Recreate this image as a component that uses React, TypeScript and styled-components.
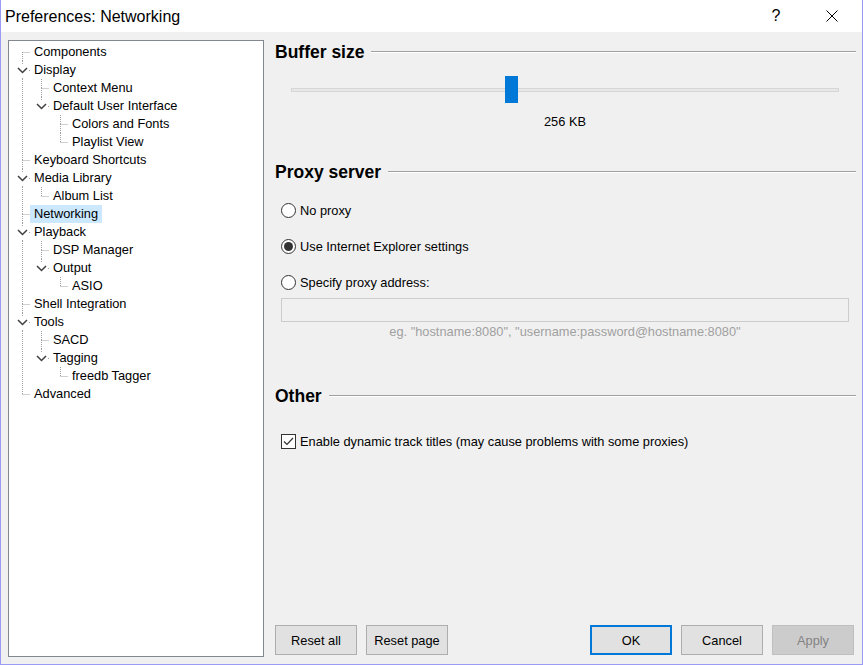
import styled, { createGlobalStyle } from "styled-components";

const GlobalStyle = createGlobalStyle`
  html, body {
    margin: 0;
    padding: 0;
    background: #ffffff;
  }
  body {
    font-family: "Liberation Sans", Arial, sans-serif;
  }
`;

const Window = styled.div`
  width: 863px;
  height: 665px;
  box-sizing: border-box;
  border: 1px solid #9b9bf5;
  border-top: none;
  display: flex;
  flex-direction: column;
  background: #f0f0f0;
  font-family: "Liberation Sans", Arial, sans-serif;
  font-size: 12.8px;
  color: #000;
`;

const TitleBar = styled.div`
  height: 32px;
  flex: none;
  background: #ffffff;
  display: flex;
  align-items: center;
  padding-left: 4px;
  padding-right: 2px;
`;

const Title = styled.div`
  flex: 1;
  font-size: 16px;
  padding-top: 1px;
  color: #000;
`;

const TitleButton = styled.div`
  width: 56px;
  height: 32px;
  display: flex;
  align-items: center;
  justify-content: center;
  font-size: 16px;
`;

const Body = styled.div`
  flex: 1;
  display: flex;
  gap: 11px;
  padding: 8px 6px 7px 7px;
  min-height: 0;
`;

const TreePanel = styled.div`
  width: 256px;
  flex: none;
  box-sizing: border-box;
  border: 1px solid #828790;
  background: #ffffff;
  padding-top: 2px;
`;

const TreeRow = styled.div`
  display: flex;
  align-items: center;
  height: 18px;
`;

const Guides = styled.svg`
  flex: none;
  display: block;
`;

const TreeLabel = styled.span<{ $selected?: boolean }>`
  padding: 0 4px;
  line-height: 18px;
  white-space: nowrap;
  background: ${(p) => (p.$selected ? "#cce8ff" : "transparent")};
`;

const Content = styled.div`
  flex: 1;
  display: flex;
  flex-direction: column;
`;

const SectionHeader = styled.div<{ $top: number }>`
  display: flex;
  align-items: center;
  gap: 7px;
  height: 24px;
  margin-top: ${(p) => p.$top}px;
  font-size: 17.5px;
  font-weight: bold;
`;

const Rule = styled.div`
  flex: 1;
  height: 1px;
  background: #a0a0a0;
  border-bottom: 1px solid #ffffff;
`;

const SliderRow = styled.div`
  display: flex;
  align-items: center;
  height: 27px;
  margin: 12px 17px 0 16px;
`;

const Track = styled.div`
  position: relative;
  flex: 1;
  height: 2px;
  background: #e7e7e7;
  border: 1px solid #d6d6d6;
`;

const Thumb = styled.div`
  position: absolute;
  top: -13px;
  width: 13px;
  height: 27px;
  background: #0078d7;
`;

const SliderValue = styled.div`
  margin: 9px 17px 0 16px;
  line-height: 20px;
  text-align: center;
`;

const OptionRow = styled.label<{ $top: number }>`
  display: flex;
  align-items: center;
  gap: 4px;
  height: 20px;
  margin: ${(p) => p.$top}px 0 0 6px;
`;

const RadioCircle = styled.span`
  width: 15px;
  height: 15px;
  box-sizing: border-box;
  border: 1px solid #333333;
  border-radius: 50%;
  background: #ffffff;
  display: flex;
  align-items: center;
  justify-content: center;
`;

const RadioDot = styled.span`
  width: 9px;
  height: 9px;
  border-radius: 50%;
  background: #333333;
`;

const CheckBox = styled.span`
  width: 15px;
  height: 15px;
  box-sizing: border-box;
  border: 1px solid #333333;
  background: #ffffff;
  display: flex;
  align-items: center;
  justify-content: center;
`;

const AddressInput = styled.div`
  height: 24px;
  box-sizing: border-box;
  margin: 6px 7px 0 6px;
  border: 1px solid #cccccc;
  background: #f0f0f0;
`;

const Hint = styled.div`
  margin: 2px 7px 0 6px;
  line-height: 16px;
  text-align: center;
  color: #a0a0a0;
`;

const Spacer = styled.div`
  flex: 1;
`;

const ButtonRow = styled.div`
  display: flex;
  gap: 9px;
  margin-bottom: 2px;
`;

const ButtonGroup = styled.div`
  display: flex;
  gap: 9px;
  margin-left: auto;
  margin-right: 2px;
`;

const Button = styled.button<{ $variant?: "default" | "disabled" }>`
  width: 82px;
  height: 30px;
  box-sizing: border-box;
  padding: 0;
  font: inherit;
  color: ${(p) => (p.$variant === "disabled" ? "#838383" : "#000")};
  background: ${(p) => (p.$variant === "disabled" ? "#cccccc" : "#e1e1e1")};
  border: ${(p) =>
    p.$variant === "default"
      ? "2px solid #0078d7"
      : p.$variant === "disabled"
      ? "1px solid #bfbfbf"
      : "1px solid #adadad"};
`;

type Node = { label: string; children?: Node[]; selected?: boolean };

const tree: Node[] = [
  { label: "Components" },
  {
    label: "Display",
    children: [
      { label: "Context Menu" },
      {
        label: "Default User Interface",
        children: [{ label: "Colors and Fonts" }, { label: "Playlist View" }],
      },
    ],
  },
  { label: "Keyboard Shortcuts" },
  { label: "Media Library", children: [{ label: "Album List" }] },
  { label: "Networking", selected: true },
  {
    label: "Playback",
    children: [{ label: "DSP Manager" }, { label: "Output", children: [{ label: "ASIO" }] }],
  },
  { label: "Shell Integration" },
  {
    label: "Tools",
    children: [{ label: "SACD" }, { label: "Tagging", children: [{ label: "freedb Tagger" }] }],
  },
  { label: "Advanced" },
];

type Row = {
  label: string;
  depth: number;
  trail: boolean[];
  hasNext: boolean;
  rootFirst: boolean;
  hasChildren: boolean;
  selected: boolean;
};

function flatten(nodes: Node[], depth: number, trail: boolean[], out: Row[]) {
  nodes.forEach((n, i) => {
    const hasNext = i < nodes.length - 1;
    out.push({
      label: n.label,
      depth,
      trail,
      hasNext,
      rootFirst: depth === 0 && i === 0,
      hasChildren: !!n.children,
      selected: !!n.selected,
    });
    if (n.children) flatten(n.children, depth + 1, [...trail, hasNext], out);
  });
  return out;
}

const rows = flatten(tree, 0, [], []);
const dot = { stroke: "#a0a0a0", strokeDasharray: "1 1" };

function TreeGuides({ row }: { row: Row }) {
  const w = 21 + 19 * row.depth;
  const c = 13.5 + 19 * row.depth;
  return (
    <Guides width={w} height={18}>
      {row.trail.map((more, a) =>
        more ? <line key={a} x1={13.5 + 19 * a} y1={0} x2={13.5 + 19 * a} y2={18} {...dot} /> : null
      )}
      {!row.rootFirst && <line x1={c} y1={0} x2={c} y2={9} {...dot} />}
      {row.hasNext && <line x1={c} y1={9} x2={c} y2={18} {...dot} />}
      {row.hasChildren ? (
        <>
          <rect x={c - 6.5} y={3} width={13} height={13} fill="#fff" />
          <polyline
            points={`${c - 4.5},7 ${c},11.5 ${c + 4.5},7`}
            fill="none"
            stroke="#404040"
            strokeWidth={1.5}
          />
          <rect x={w - 1} y={9} width={1} height={1} fill="#a0a0a0" />
        </>
      ) : (
        <line x1={c} y1={9.5} x2={w} y2={9.5} {...dot} />
      )}
    </Guides>
  );
}

export default function App() {
  return (
    <>
      <GlobalStyle />
      <Window>
        <TitleBar>
          <Title>Preferences: Networking</Title>
          <TitleButton>?</TitleButton>
          <TitleButton>
            <svg width="12" height="12" viewBox="0 0 12 12">
              <path d="M0.5 0.5 L11.5 11.5 M11.5 0.5 L0.5 11.5" stroke="#000" strokeWidth="1" />
            </svg>
          </TitleButton>
        </TitleBar>
        <Body>
          <TreePanel>
            {rows.map((r) => (
              <TreeRow key={r.label}>
                <TreeGuides row={r} />
                <TreeLabel $selected={r.selected}>{r.label}</TreeLabel>
              </TreeRow>
            ))}
          </TreePanel>
          <Content>
            <SectionHeader $top={0}>
              Buffer size
              <Rule />
            </SectionHeader>
            <SliderRow>
              <Track>
                <Thumb style={{ left: "39%" }} />
              </Track>
            </SliderRow>
            <SliderValue>256 KB</SliderValue>

            <SectionHeader $top={28}>
              Proxy server
              <Rule />
            </SectionHeader>
            <OptionRow $top={16}>
              <RadioCircle />
              No proxy
            </OptionRow>
            <OptionRow $top={16}>
              <RadioCircle>
                <RadioDot />
              </RadioCircle>
              Use Internet Explorer settings
            </OptionRow>
            <OptionRow $top={16}>
              <RadioCircle />
              Specify proxy address:
            </OptionRow>
            <AddressInput />
            <Hint>eg. "hostname:8080", "username:password@hostname:8080"</Hint>

            <SectionHeader $top={44}>
              Other
              <Rule />
            </SectionHeader>
            <OptionRow $top={23}>
              <CheckBox>
                <svg width="13" height="13" viewBox="0 0 13 13">
                  <polyline points="2,6.5 5,9.5 11,3" fill="none" stroke="#333" strokeWidth="1.2" />
                </svg>
              </CheckBox>
              Enable dynamic track titles (may cause problems with some proxies)
            </OptionRow>

            <Spacer />
            <ButtonRow>
              <Button>Reset all</Button>
              <Button>Reset page</Button>
              <ButtonGroup>
                <Button $variant="default">OK</Button>
                <Button>Cancel</Button>
                <Button $variant="disabled">Apply</Button>
              </ButtonGroup>
            </ButtonRow>
          </Content>
        </Body>
      </Window>
    </>
  );
}
